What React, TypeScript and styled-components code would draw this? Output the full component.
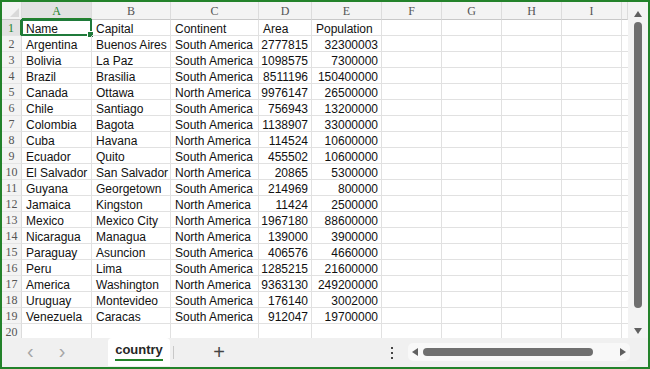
import React from 'react';
import { styled, createGlobalStyle } from 'styled-components';

const GlobalStyle = createGlobalStyle`
  html, body {
    margin: 0;
    padding: 0;
    background: #ffffff;
  }
`;

type Row = [string, string, string, string, string];

const header: Row = ['Name', 'Capital', 'Continent', 'Area', 'Population'];

const rows: Row[] = [
  ['Argentina', 'Buenos Aires', 'South America', '2777815', '32300003'],
  ['Bolivia', 'La Paz', 'South America', '1098575', '7300000'],
  ['Brazil', 'Brasilia', 'South America', '8511196', '150400000'],
  ['Canada', 'Ottawa', 'North America', '9976147', '26500000'],
  ['Chile', 'Santiago', 'South America', '756943', '13200000'],
  ['Colombia', 'Bagota', 'South America', '1138907', '33000000'],
  ['Cuba', 'Havana', 'North America', '114524', '10600000'],
  ['Ecuador', 'Quito', 'South America', '455502', '10600000'],
  ['El Salvador', 'San Salvador', 'North America', '20865', '5300000'],
  ['Guyana', 'Georgetown', 'South America', '214969', '800000'],
  ['Jamaica', 'Kingston', 'North America', '11424', '2500000'],
  ['Mexico', 'Mexico City', 'North America', '1967180', '88600000'],
  ['Nicaragua', 'Managua', 'North America', '139000', '3900000'],
  ['Paraguay', 'Asuncion', 'South America', '406576', '4660000'],
  ['Peru', 'Lima', 'South America', '1285215', '21600000'],
  ['America', 'Washington', 'North America', '9363130', '249200000'],
  ['Uruguay', 'Montevideo', 'South America', '176140', '3002000'],
  ['Venezuela', 'Caracas', 'South America', '912047', '19700000']
];

const columns = ['A', 'B', 'C', 'D', 'E', 'F', 'G', 'H', 'I', ''];
// Area and Population are right aligned like numbers
const numericCols = [3, 4];

function App() {
  const allRows: (Row | null)[] = [header, ...rows, null];

  return (
    <>
      <GlobalStyle />
      <Frame>
        <Body>
          <Sheet>
            <Corner>
              <CornerMark />
            </Corner>
            {columns.map((c, i) => (
              <ColHead key={c + i} $active={i === 0}>
                {c}
              </ColHead>
            ))}
            {allRows.map((row, r) => (
              <React.Fragment key={r}>
                <RowHead $active={r === 0}>{r + 1}</RowHead>
                {columns.map((_, ci) => {
                  const value = row && ci < 5 ? row[ci] : '';
                  const right = r > 0 && numericCols.includes(ci);
                  return (
                    <Cell key={ci} $right={right}>
                      {value}
                      {r === 0 && ci === 0 && (
                        <Selection>
                          <Handle />
                        </Selection>
                      )}
                    </Cell>
                  );
                })}
              </React.Fragment>
            ))}
          </Sheet>
          <VScroll>
            <ArrowUp />
            <VThumb />
            <ArrowDown />
          </VScroll>
        </Body>
        <TabBar>
          <NavArrows>
            <NavArrow>&#x2039;</NavArrow>
            <NavArrow>&#x203A;</NavArrow>
          </NavArrows>
          <Tab>
            <TabLabel>country</TabLabel>
          </Tab>
          <TabDivider />
          <AddTab>+</AddTab>
          <Spacer />
          <MoreDots>
            <Dot />
            <Dot />
            <Dot />
          </MoreDots>
          <HScroll>
            <ArrowLeft />
            <HThumb />
            <ArrowRight />
          </HScroll>
        </TabBar>
      </Frame>
    </>
  );
}

const Frame = styled.div`
  width: 650px;
  height: 369px;
  box-sizing: border-box;
  border: 2px solid #23822a;
  display: flex;
  flex-direction: column;
  overflow: hidden;
  background: #ffffff;
  font-family: 'Liberation Sans', Arial, sans-serif;
`;
const Body = styled.div`
  flex: 1;
  display: flex;
  min-height: 0;
`;
const Sheet = styled.div`
  flex: 1;
  display: grid;
  grid-template-columns: 20px 70px 79px 88px 53px 70px 60px 60px 60px 60px 6px;
  grid-auto-rows: 16px;
  grid-template-rows: 18px;
  overflow: hidden;
  align-content: start;
`;
const Corner = styled.div`
  position: relative;
  background: #f3f3f3;
  border-right: 1px solid #dcdcdc;
  border-bottom: 1px solid #c8c8c8;
  box-sizing: border-box;
`;
const CornerMark = styled.div`
  position: absolute;
  right: 2px;
  bottom: 2px;
  width: 0;
  height: 0;
  border-left: 9px solid transparent;
  border-bottom: 9px solid #d9d9d9;
`;
const ColHead = styled.div<{ $active: boolean }>`
  box-sizing: border-box;
  background: ${(p) => (p.$active ? '#e2e2e2' : '#f3f3f3')};
  border-right: 1px solid #dcdcdc;
  border-bottom: ${(p) => (p.$active ? '2px solid #23822a' : '1px solid #c8c8c8')};
  color: ${(p) => (p.$active ? '#23822a' : '#555555')};
  font-family: 'Liberation Serif', 'Times New Roman', serif;
  font-size: 12px;
  display: flex;
  align-items: center;
  justify-content: center;
  padding-top: 2px;
`;
const RowHead = styled.div<{ $active: boolean }>`
  box-sizing: border-box;
  background: ${(p) => (p.$active ? '#e2e2e2' : '#f3f3f3')};
  border-right: ${(p) => (p.$active ? '2px solid #23822a' : '1px solid #dcdcdc')};
  border-bottom: 1px solid #e4e4e4;
  color: ${(p) => (p.$active ? '#23822a' : '#555555')};
  font-family: 'Liberation Serif', 'Times New Roman', serif;
  font-size: 12px;
  line-height: 12px;
  display: flex;
  align-items: flex-start;
  justify-content: center;
  padding-top: 2px;
`;
const Cell = styled.div<{ $right: boolean }>`
  position: relative;
  box-sizing: border-box;
  border-right: 1px solid #e1e1e1;
  border-bottom: 1px solid #e1e1e1;
  font-size: 12px;
  color: #111111;
  white-space: nowrap;
  display: flex;
  align-items: flex-start;
  justify-content: ${(p) => (p.$right ? 'flex-end' : 'flex-start')};
  padding: 2px 3px 0 4px;
  line-height: 14px;
`;
const Selection = styled.div`
  position: absolute;
  left: -1px;
  top: -1px;
  right: -1px;
  bottom: -1px;
  border: 2px solid #1f7a3a;
  pointer-events: none;
`;
const Handle = styled.div`
  position: absolute;
  right: -4px;
  bottom: -4px;
  width: 5px;
  height: 5px;
  background: #1f7a3a;
  border: 1px solid #ffffff;
`;
const VScroll = styled.div`
  width: 20px;
  background: #f3f3f3;
  display: flex;
  flex-direction: column;
  align-items: center;
  padding-top: 9px;
  box-sizing: border-box;
`;
const ArrowUp = styled.div`
  width: 0;
  height: 0;
  border-left: 4px solid transparent;
  border-right: 4px solid transparent;
  border-bottom: 6px solid #606060;
`;
const ArrowDown = styled.div`
  margin-top: 20px;
  width: 0;
  height: 0;
  border-left: 4px solid transparent;
  border-right: 4px solid transparent;
  border-top: 6px solid #606060;
`;
const VThumb = styled.div`
  margin-top: 5px;
  width: 8px;
  height: 286px;
  border-radius: 4px;
  background: #6f6f6f;
`;
const TabBar = styled.div`
  height: 29px;
  flex-shrink: 0;
  background: #f0f0f0;
  display: flex;
  align-items: stretch;
`;
const NavArrows = styled.div`
  width: 106px;
  display: flex;
  align-items: center;
  padding-left: 25px;
  gap: 25px;
  box-sizing: border-box;
`;
const NavArrow = styled.span`
  color: #a6a6a6;
  font-size: 20px;
  line-height: 1;
  margin-top: -3px;
`;
const Tab = styled.div`
  width: 62px;
  background: #ffffff;
  border-radius: 4px 4px 0 0;
  display: flex;
  justify-content: center;
  align-items: center;
  margin-bottom: 1px;
`;
const TabLabel = styled.span`
  font-family: 'Liberation Sans', Arial, sans-serif;
  font-weight: bold;
  font-size: 13px;
  color: #262626;
  padding-bottom: 2px;
  border-bottom: 2px solid #23822a;
  line-height: 14px;
`;
const TabDivider = styled.div`
  width: 1px;
  margin: 8px 0 8px 3px;
  background: #c8c8c8;
`;
const AddTab = styled.div`
  width: 90px;
  display: flex;
  align-items: center;
  justify-content: center;
  font-size: 20px;
  color: #444444;
  font-weight: 300;
`;
const Spacer = styled.div`
  flex: 1;
`;
const MoreDots = styled.div`
  width: 16px;
  margin-right: 8px;
  display: flex;
  flex-direction: column;
  align-items: center;
  justify-content: center;
  gap: 3px;
`;
const Dot = styled.div`
  width: 2px;
  height: 2px;
  background: #444444;
`;
const HScroll = styled.div`
  width: 222px;
  margin: 5px 18px 6px 0;
  background: #f8f8f8;
  border-radius: 5px;
  display: flex;
  align-items: center;
  padding: 0 4px;
  box-sizing: border-box;
`;
const ArrowLeft = styled.div`
  width: 0;
  height: 0;
  border-top: 4px solid transparent;
  border-bottom: 4px solid transparent;
  border-right: 6px solid #606060;
`;
const ArrowRight = styled.div`
  margin-left: 27px;
  width: 0;
  height: 0;
  border-top: 4px solid transparent;
  border-bottom: 4px solid transparent;
  border-left: 6px solid #606060;
`;
const HThumb = styled.div`
  margin-left: 5px;
  width: 170px;
  height: 8px;
  border-radius: 4px;
  background: #6f6f6f;
`;

export default App;
